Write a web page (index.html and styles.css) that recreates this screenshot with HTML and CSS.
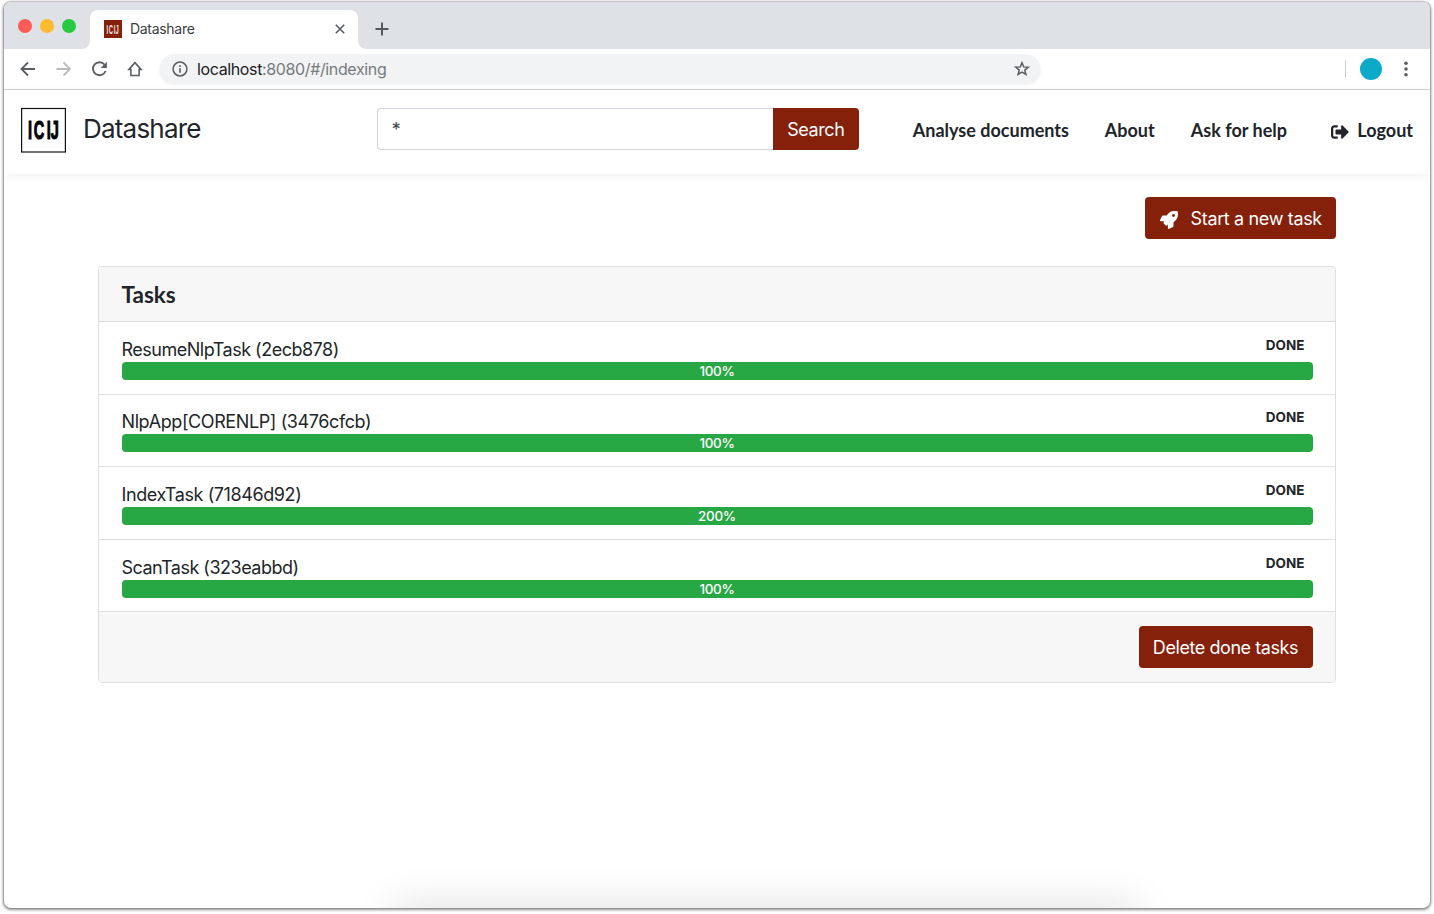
FILE: index.html
```html
<!DOCTYPE html>
<html lang="en">
<head>
<meta charset="utf-8">
<title>Datashare</title>
<link rel="stylesheet" href="styles.css">
</head>
<body>
<div class="window">
  <div class="tabbar">
    <div class="lights"><i class="red"></i><i class="yellow"></i><i class="green"></i></div>
    <div class="tab">
      <svg class="favicon" width="18" height="18" viewBox="0 0 18 18"><rect width="18" height="18" fill="#85200a"/><text x="13.2 23.4 46.5 54" y="31" transform="translate(-.5 -1.1) scale(.22 .475)" class="mark mark-small">ICIJ</text></svg>
      <span class="tab-title">Datashare</span>
      <svg class="close" width="10" height="10" viewBox="0 0 10 10"><path d="M.8.8l8.4 8.4M9.2.8L.8 9.2" stroke="#5a5d61" stroke-width="1.6"/></svg>
      <svg class="curve curve-left" width="8" height="8"><path d="M8 0v8H0a8 8 0 0 0 8-8" fill="#fff"/></svg>
      <svg class="curve curve-right" width="8" height="8"><path d="M0 0v8h8a8 8 0 0 1-8-8" fill="#fff"/></svg>
    </div>
    <svg class="plus" width="14" height="14" viewBox="0 0 14 14"><path d="M7 .5v13M.5 7h13" stroke="#55585c" stroke-width="2"/></svg>
  </div>
  <div class="toolbar">
    <svg class="nav-icon" width="16" height="16" viewBox="0 0 16 16"><path d="M15 8H2M8 1.5L1.5 8 8 14.5" fill="none" stroke="#5a5d61" stroke-width="1.8"/></svg>
    <svg class="nav-icon" width="16" height="16" viewBox="0 0 16 16"><path d="M.5 8h13M7.5 1.500L14 8l-6.500 6.500" fill="none" stroke="#b9bbbd" stroke-width="1.800"/></svg>
    <svg class="nav-icon" width="16" height="16" viewBox="0 0 16 16"><path d="M12.600 3.700A6.500 6.500 0 1 0 13.600 10" fill="none" stroke="#5a5d61" stroke-width="1.800"/><path d="M14.900 .8v6.200H8.700z" fill="#5a5d61"/></svg>
    <svg class="nav-icon" width="16" height="16" viewBox="0 0 16 16"><path d="M7 1.600L.9 8.400H2.900V14.500h8.200V8.400h2z" fill="none" stroke="#5a5d61" stroke-width="1.600"/></svg>
    <div class="address">
      <svg width="16" height="16" viewBox="0 0 16 16"><circle cx="8" cy="8" r="6.900" fill="none" stroke="#5a5d61" stroke-width="1.500"/><path d="M8 7.200v4.500M8 4.200v1.700" stroke="#5a5d61" stroke-width="1.600"/></svg>
      <span class="url"><b>localhost</b>:8080/#/indexing</span>
      <svg class="star" width="16" height="16" viewBox="0 0 16 16"><path d="M8 1.700l1.700 4.200 4.600.3-3.500 2.900 1.100 4.400L8 11.100l-3.900 2.400 1.100-4.400L1.700 6.200l4.600-.3z" fill="none" stroke="#5a5d61" stroke-width="1.500"/></svg>
    </div>
    <span class="divider"></span>
    <span class="avatar"></span>
    <svg class="dots" width="4" height="16" viewBox="0 0 4 16"><g fill="#5a5d61"><circle cx="2" cy="2.300" r="1.800"/><circle cx="2" cy="8" r="1.800"/><circle cx="2" cy="13.700" r="1.800"/></g></svg>
  </div>
  <header class="header">
    <svg class="logo" width="45" height="45" viewBox="0 0 45 45"><rect x=".6" y=".5" width="43.800" height="43.500" fill="#fff" stroke="#111" stroke-width="1.200"/><text x="12.8 23.4 46.8 54.2" y="31" transform="scale(.55 1)" class="mark mark-large">ICIJ</text></svg>
    <span class="brand">Datashare</span>
    <div class="search"><span class="field">*</span><span class="button search-button"><span class="label-search">Search</span></span></div>
    <nav class="links">
      <a class="link-analyse">Analyse documents</a><a class="link-about">About</a><a class="link-help">Ask for help</a>
      <a class="link-logout"><svg width="18" height="18" viewBox="0 0 512 512"><path fill="#212529" d="M497 273L329 441c-15 15-41 4.500-41-17v-96H152c-13.300 0-24-10.700-24-24v-96c0-13.300 10.700-24 24-24h136V88c0-21.400 25.900-32 41-17l168 168c9.300 9.400 9.300 24.600 0 34zM192 436v-40c0-6.600-5.400-12-12-12H96c-17.700 0-32-14.300-32-32V160c0-17.700 14.300-32 32-32h84c6.600 0 12-5.400 12-12V76c0-6.600-5.400-12-12-12H96c-53 0-96 43-96 96v192c0 53 43 96 96 96h84c6.600 0 12-5.400 12-12z"/></svg>Logout</a>
    </nav>
  </header>
  <main class="content">
    <div class="actions">
      <span class="button start"><svg width="18" height="18" viewBox="0 0 512 512"><path fill="#fff" d="M505 19c-1-5-6-10-11-11C460 0 435 0 409 0 302 0 238 57 190 128H94c-16 0-36 12-43 27L4 249c-12 24 2 39 20 39h103l-22 22c-13 13-13 33 0 46l51 51c13 13 33 13 46 0l22-22v103c0 18 16 32 39 20l94-47c15-7 27-27 27-43v-96c71-49 128-113 128-219 0-27 0-52-7-84zM384 168a40 40 0 1 1 0-80 40 40 0 0 1 0 80z"/></svg><span class="label-start">Start a new task</span></span>
    </div>
    <section class="card">
      <h2 class="card-title">Tasks</h2>
      <div class="task"><div class="task-head"><span class="name n1">ResumeNlpTask (2ecb878)</span><span class="badge">DONE</span></div><div class="bar">100%</div></div>
      <div class="task"><div class="task-head"><span class="name n2">NlpApp[CORENLP] (3476cfcb)</span><span class="badge">DONE</span></div><div class="bar">100%</div></div>
      <div class="task"><div class="task-head"><span class="name n3">IndexTask (71846d92)</span><span class="badge">DONE</span></div><div class="bar">200%</div></div>
      <div class="task"><div class="task-head"><span class="name n4">ScanTask (323eabbd)</span><span class="badge">DONE</span></div><div class="bar">100%</div></div>
      <div class="card-footer"><span class="button delete"><span class="label-delete">Delete done tasks</span></span></div>
    </section>
  </main>
  <div class="glow"></div>
</div>
</body>
</html>
```

FILE: styles.css
```css
* { box-sizing: border-box; }
body { margin: 0; padding: 2px 4px 6px; height: 914px; overflow: hidden; background: #fff; color: #212529; font-family: Inter, "Liberation Sans", sans-serif; font-size: 18px; white-space: nowrap; }
svg { display: block; flex: none; overflow: visible; }
.window { position: relative; width: 1426px; height: 906px; background: #fff; border-radius: 7px; box-shadow: 0 0 1px 1px rgba(0,0,0,.12), 0 1px 3px 1px rgba(0,0,0,.42); overflow: hidden; }
.tabbar { display: flex; height: 47px; background: #dee1e6; }
.lights { display: flex; gap: 8px; width: 86px; padding: 17px 0 0 13.500px; }
.lights i { width: 14px; height: 14px; border-radius: 50%; }
.red { background: #fc5b57; }
.yellow { background: #fdbc2e; }
.green { background: #28c840; }
.tab { position: relative; display: flex; align-items: center; width: 268px; height: 39px; margin-top: 8px; padding: 0 13px 1px 14px; background: #fff; border-radius: 8px 8px 0 0; }
.curve { position: absolute; bottom: 0; }
.curve-left { left: -8px; }
.curve-right { right: -8px; }
.tab-title { margin-left: 8px; font-size: 14px; line-height: 16px; padding-bottom: 1px; color: #3c4043; letter-spacing: -.3px; }
.close { margin-left: auto; }
.plus { margin: 20.400px 0 0 17.400px; }
.mark { font-family: "Liberation Sans", sans-serif; font-weight: 700; font-size: 26.500px; }
.mark-small { fill: #f5e6e2; }
.mark-large { fill: #000; stroke: #000; stroke-width: 1.1; }
.toolbar { display: flex; align-items: center; height: 41px; padding-left: 16px; border-bottom: 1px solid #cfd1d3; }
.nav-icon { margin-right: 20px; }
.address { display: flex; align-items: center; width: 882px; height: 31px; margin-left: -5px; padding: 0 11.500px 0 12.500px; border-radius: 16px; background: #f1f3f4; }
.url { margin-left: 9.500px; font-size: 16px; color: #777b80; letter-spacing: -.37px; }
.url b { font-weight: 400; color: #202124; }
.star { margin-left: auto; }
.divider { width: 1px; height: 18px; margin-left: 304px; background: #ccced0; }
.avatar { width: 22px; height: 22px; margin-left: 13.500px; border-radius: 50%; background: #0caac8; }
.dots { margin-left: 22.500px; }
.header { position: relative; display: flex; height: 84px; padding: 18px 17px 0; box-shadow: 0 2px 9px rgba(0,0,0,.06); }
.brand { width: 294px; margin-left: 17px; font-size: 26px; line-height: 42px; letter-spacing: -.8px; }
.search { display: flex; width: 483px; height: 42px; }
.field { flex: 1; padding-left: 14px; border: 1px solid #ced4da; border-right: 0; border-radius: 4px 0 0 4px; font-weight: 500; line-height: 42px; color: #495057; }
.button { display: flex; align-items: center; justify-content: center; height: 42px; border-radius: 4px; background: #85200a; color: #fff; }
.search-button { width: 86px; border-radius: 0 4px 4px 0; }
.label-search { letter-spacing: -.4px; }
.links { display: flex; flex: 1; padding-left: 54px; font: 700 18px/45px Lato, sans-serif; }
.link-analyse { width: 192px; }
.link-about { width: 86px; }
.link-help { width: 140px; }
.link-logout { display: flex; align-items: center; gap: 8.500px; height: 45px; }
.link-logout svg { margin-top: 3px; }
.content { width: 1238px; margin: 23px 0 0 94px; }
.actions { display: flex; justify-content: flex-end; }
.start { width: 190.600px; gap: 13px; }
.start svg { margin-top: 4px; }
.label-start { letter-spacing: -.35px; }
.card { height: 417px; margin-top: 27px; border: 1px solid #dfdfdf; border-radius: 4px; overflow: hidden; }
.card-title { height: 55px; margin: 0; padding-left: 22.500px; border-bottom: 1px solid #d8d8d8; background: #f7f7f7; font: 700 22.500px/55px Lato, sans-serif; }
.task { height: 72.600px; padding: 12.800px 22.500px 0; border-bottom: 1px solid #dfdfdf; }
.task-head { display: flex; justify-content: space-between; height: 27px; line-height: 29px; }
.n1, .n4 { letter-spacing: -.5px; }
.n2, .n3 { letter-spacing: -.4px; }
.badge { padding-right: 8px; font-size: 13.500px; font-weight: 700; line-height: 20.500px; }
.bar { height: 18px; border-radius: 4px; background: #28a745; color: #fff; font-size: 13.500px; font-weight: 500; line-height: 18px; text-align: center; letter-spacing: -.3px; }
.card-footer { display: flex; justify-content: flex-end; height: 71px; padding: 13.900px 22.500px 0; background: #f7f7f7; }
.delete { width: 174px; }
.label-delete { letter-spacing: -.43px; }
.glow { position: absolute; left: 396px; top: 910px; width: 730px; height: 20px; box-shadow: 0 0 40px 8px rgba(0,0,0,.12); }
```
